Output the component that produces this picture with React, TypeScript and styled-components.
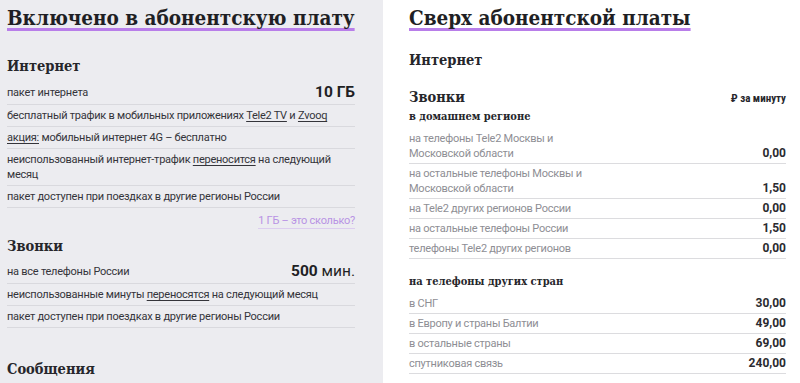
import React from 'react';
import styled, { createGlobalStyle } from 'styled-components';

const GlobalStyle = createGlobalStyle`
	html, body {
		margin: 0;
		padding: 0;
		background: #fff;
	}
	body {
		font-family: Roboto, "Liberation Sans", sans-serif;
		color: #2b2b30;
	}
`;

const SERIF = `"DejaVu Serif", "Liberation Serif", serif`;

const Page = styled.div`
	display: grid;
	grid-template-columns: 383px 1fr;
	width: 800px;
	height: 383px;
	overflow: hidden;
`;

const Panel = styled.section<{ $shaded?: boolean }>`
	background: ${({ $shaded }): string => ($shaded ? '#ececf0' : '#fff')};
	padding: ${({ $shaded }): string => ($shaded ? '3px 28px 0 7px' : '3px 14px 0 26px')};
`;

const Title = styled.h2`
	margin: 0;
	font-family: ${SERIF};
	font-stretch: condensed;
	font-weight: 700;
	font-size: 20.5px;
	line-height: 30px;
	color: #1f1f24;
	white-space: nowrap;

	span {
		text-decoration: underline 3px #b87ee9;
		text-underline-offset: 3px;
		text-decoration-skip-ink: none;
	}
`;

const Heading = styled.h3<{ $top: number }>`
	margin: ${({ $top }): string => `${$top}px 0 0`};
	font-family: ${SERIF};
	font-stretch: condensed;
	font-weight: 700;
	font-size: 14.5px;
	line-height: 20px;
	color: #26262b;
	display: flex;
	justify-content: space-between;
	align-items: baseline;
`;

const PerMinute = styled.span`
	font-family: Roboto, "Liberation Sans", sans-serif;
	font-size: 11px;
	font-weight: 700;
	color: #26262b;
`;

const SubHeading = styled.h4<{ $top: number }>`
	margin: ${({ $top }): string => `${$top}px 0 5px`};
	font-family: ${SERIF};
	font-stretch: condensed;
	font-weight: 700;
	font-size: 11px;
	line-height: 15px;
	color: #26262b;
`;

const List = styled.ul<{ $top?: number }>`
	list-style: none;
	margin: ${({ $top = 0 }): string => `${$top}px 0 0`};
	padding: 0;
`;

const Row = styled.li<{ $muted?: boolean; $tall?: boolean }>`
	display: flex;
	justify-content: space-between;
	align-items: ${({ $tall }): string => ($tall ? 'center' : 'flex-end')};
	gap: 12px;
	padding: ${({ $muted, $tall }): string => ($tall ? '1px 0 2px' : $muted ? '2px 0 2px' : '3px 0 3px')};
	border-bottom: 1px solid ${({ $muted }): string => ($muted ? '#dcdcdf' : '#d9d9de')};
	font-size: 11px;
	letter-spacing: -0.25px;
	line-height: 15px;
	color: ${({ $muted }): string => ($muted ? '#8e8e94' : '#34343a')};
`;

const Label = styled.span<{ $width?: number }>`
	max-width: ${({ $width = 336 }): string => `${$width}px`};

	u {
		text-underline-offset: 2px;
	}
`;

const Price = styled.span`
	font-weight: 700;
	font-size: 12px;
	letter-spacing: 0;
	color: #2b2b30;
	white-space: nowrap;
`;

const Amount = styled.span`
	font-size: 15.5px;
	line-height: 20px;
	font-weight: 700;
	letter-spacing: 0;
	color: #1f1f24;
	white-space: nowrap;

	small {
		font-size: 15.5px;
		font-weight: 400;
	}
`;

const LinkRow = styled.div`
	display: flex;
	justify-content: flex-end;
	padding-top: 5px;
	font-size: 11px;
	letter-spacing: -0.25px;
	line-height: 15px;
`;

const SoftLink = styled.a`
	color: #b892e4;
	text-decoration: none;
	border-bottom: 1px solid #dccdef;
`;

type PriceRow = [string, string];

const homeRates: PriceRow[] = [
	['на телефоны Tele2 Москвы и Московской области', '0,00'],
	['на остальные телефоны Москвы и Московской области', '1,50'],
	['на Tele2 других регионов России', '0,00'],
	['на остальные телефоны России', '1,50'],
	['телефоны Tele2 других регионов', '0,00'],
];

const abroadRates: PriceRow[] = [
	['в СНГ', '30,00'],
	['в Европу и страны Балтии', '49,00'],
	['в остальные страны', '69,00'],
	['спутниковая связь', '240,00'],
];

const App = (): React.ReactElement => (
	<>
		<GlobalStyle />
		<Page>
			<Panel $shaded>
				<Title>
					<span>Включено в абонентскую плату</span>
				</Title>
				<Heading $top={23}>Интернет</Heading>
				<List $top={5}>
					<Row $tall>
						<Label>пакет интернета</Label>
						<Amount>10 ГБ</Amount>
					</Row>
					<Row>
						<Label>
							бесплатный трафик в мобильных приложениях <u>Tele2 TV</u> и <u>Zvooq</u>
						</Label>
					</Row>
					<Row>
						<Label>
							<u>акция:</u> мобильный интернет 4G – бесплатно
						</Label>
					</Row>
					<Row>
						<Label>
							неиспользованный интернет-трафик <u>переносится</u> на следующий месяц
						</Label>
					</Row>
					<Row>
						<Label>пакет доступен при поездках в другие регионы России</Label>
					</Row>
				</List>
				<LinkRow>
					<SoftLink href="#">1 ГБ – это сколько?</SoftLink>
				</LinkRow>
				<Heading $top={7}>Звонки</Heading>
				<List $top={4}>
					<Row $tall>
						<Label>на все телефоны России</Label>
						<Amount>
							500 <small>мин.</small>
						</Amount>
					</Row>
					<Row>
						<Label>
							неиспользованные минуты <u>переносятся</u> на следующий месяц
						</Label>
					</Row>
					<Row>
						<Label>пакет доступен при поездках в другие регионы России</Label>
					</Row>
				</List>
				<Heading $top={31}>Сообщения</Heading>
			</Panel>
			<Panel>
				<Title>
					<span>Сверх абонентской платы</span>
				</Title>
				<Heading $top={17}>Интернет</Heading>
				<Heading $top={17}>
					Звонки
					<PerMinute>₽ за минуту</PerMinute>
				</Heading>
				<SubHeading $top={0}>в домашнем регионе</SubHeading>
				<List>
					{homeRates.map(([label, price]) => (
						<Row key={label} $muted>
							<Label $width={185}>{label}</Label>
							<Price>{price}</Price>
						</Row>
					))}
				</List>
				<SubHeading $top={15}>на телефоны других стран</SubHeading>
				<List>
					{abroadRates.map(([label, price]) => (
						<Row key={label} $muted>
							<Label>{label}</Label>
							<Price>{price}</Price>
						</Row>
					))}
				</List>
			</Panel>
		</Page>
	</>
);

export default App;
